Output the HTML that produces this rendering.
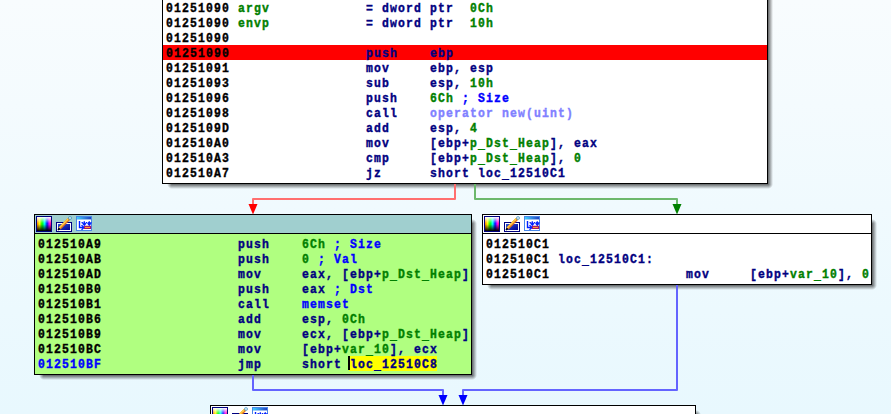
<!DOCTYPE html><html><head><meta charset="utf-8"><style>
html,body{margin:0;padding:0;}
body{width:891px;height:414px;overflow:hidden;position:relative;background:linear-gradient(to bottom,#f8fcfe 0%,#e8f8fe 100%);}
.t{position:absolute;left:0;top:0;font:bold 13.333px "Liberation Mono",monospace;letter-spacing:1.335px;transform:scaleX(0.857);transform-origin:0 0;-webkit-text-stroke:0.4px currentColor;line-height:15px;white-space:pre;color:#000;}
.t i.u{font-style:normal;position:relative;top:1px}
.n{color:#000080}.g{color:#008000}.b{color:#0000ff}.p{color:#8080ff}.k{color:#000}
svg{position:absolute;left:0;top:0;overflow:visible}
</style></head><body>
<svg width="0" height="0" style="position:absolute">
<defs>
<linearGradient id="rb" x1="0" y1="0" x2="1" y2="0">
<stop offset="0" stop-color="#ff7a00"/><stop offset="0.18" stop-color="#f8ff00"/><stop offset="0.36" stop-color="#00ff00"/>
<stop offset="0.55" stop-color="#00ffff"/><stop offset="0.72" stop-color="#0010ff"/><stop offset="0.88" stop-color="#ff00ff"/><stop offset="1" stop-color="#ff2080"/>
</linearGradient>
<linearGradient id="wb" x1="0" y1="0" x2="0" y2="1">
<stop offset="0" stop-color="#fff" stop-opacity="1"/><stop offset="0.45" stop-color="#fff" stop-opacity="0"/>
<stop offset="0.5" stop-color="#000" stop-opacity="0"/><stop offset="1" stop-color="#000" stop-opacity="1"/>
</linearGradient>
<linearGradient id="bf" x1="0" y1="0" x2="1" y2="1">
<stop offset="0" stop-color="#3050d8"/><stop offset="1" stop-color="#000090"/>
</linearGradient>
<linearGradient id="tb" x1="0" y1="0" x2="1" y2="0">
<stop offset="0" stop-color="#40d0ff"/><stop offset="1" stop-color="#2040c0"/>
</linearGradient>
<symbol id="i1" viewBox="0 0 16 16">
<rect x="0.5" y="0.5" width="15" height="15" fill="#000080"/>
<rect x="1" y="1" width="14" height="14" fill="url(#rb)"/>
<rect x="1" y="1" width="14" height="14" fill="url(#wb)"/>
<rect x="0.5" y="0.5" width="15" height="15" fill="none" stroke="#000080" stroke-width="1"/>
</symbol>
<symbol id="i2" viewBox="0 0 16 16">
<rect x="0" y="6" width="16" height="10" fill="#000080"/>
<rect x="1" y="7" width="14" height="8" fill="#fff"/>
<rect x="2" y="8" width="12" height="6" fill="url(#bf)"/>
<path d="M3.6 12.4 L13 3" stroke="#e87818" stroke-width="2.8"/>
<path d="M3 12 L12.4 2.6" stroke="#ffc828" stroke-width="1.4"/>
<path d="M4 11.5 L12 3.5" stroke="#fff" stroke-width="0.7" stroke-dasharray="0.8 1"/>
<path d="M2 14 L3.6 12.4" stroke="#000" stroke-width="1.6"/>
<circle cx="14" cy="2" r="1.8" fill="#3890c0"/>
<circle cx="14" cy="2" r="0.9" fill="#f0f8ff"/>
</symbol>
<symbol id="i3" viewBox="0 0 16 16">
<rect x="0" y="0" width="16" height="15" fill="#4a88e8"/>
<rect x="1" y="1" width="14" height="2.5" fill="url(#tb)"/>
<rect x="1" y="3.5" width="14" height="10.5" fill="#fff"/>
<path d="M3.5 5 V11.5 H7.5" stroke="#0020ff" stroke-width="1.4" fill="none"/>
<path d="M5.5 9.3 L8 11.5 L5.5 13.7" stroke="#0020ff" stroke-width="1.4" fill="none"/>
<path d="M5.5 6.6 H15.5" stroke="#0020ff" stroke-width="1.4" stroke-dasharray="1.4 0.8"/>
<path d="M8.3 5.2 V8.8 M6.6 7.2 L8.3 9.2 L10 7.2 M13.3 5.2 V8.8 M11.6 7.2 L13.3 9.2 L15 7.2" stroke="#0020ff" stroke-width="1.3" fill="none"/>
<rect x="8" y="9.8" width="7.2" height="3.2" rx="0.6" fill="#a01470"/>
<rect x="9" y="10.9" width="5" height="1.1" fill="#ffa030"/>
</symbol>
</defs></svg>
<div style="position:absolute;left:768px;top:-30px;width:5px;height:214px;background:linear-gradient(to right,rgba(0,0,0,0.60),rgba(0,0,0,0))"></div>
<div style="position:absolute;left:172px;top:184px;width:596px;height:5px;background:linear-gradient(to bottom,rgba(0,0,0,0.60),rgba(0,0,0,0))"></div>
<div style="position:absolute;left:768px;top:-35px;width:5px;height:5px;background:radial-gradient(circle 5px at 0 100%,rgba(0,0,0,0.60),rgba(0,0,0,0))"></div>
<div style="position:absolute;left:167px;top:184px;width:5px;height:5px;background:radial-gradient(circle 5px at 100% 0,rgba(0,0,0,0.60),rgba(0,0,0,0))"></div>
<div style="position:absolute;left:768px;top:184px;width:5px;height:5px;background:radial-gradient(circle 5px at 0 0,rgba(0,0,0,0.60),rgba(0,0,0,0))"></div>
<div style="position:absolute;left:162px;top:-40px;width:606px;height:224px;background:#000"></div>
<div style="position:absolute;left:163px;top:-39px;width:604px;height:222px;background:#fff;"></div>
<div style="position:absolute;left:163px;top:45px;width:604px;height:15px;background:#f00;"></div>
<div class="t" style="left:166px;top:1px"><span class="k">01251090</span> <span class="g">argv</span>            <span class="n">= dword ptr</span>  <span class="g">0Ch</span>
<span class="k">01251090</span> <span class="g">envp</span>            <span class="n">= dword ptr</span>  <span class="g">10h</span>
<span class="k">01251090</span>
<span class="k">01251090</span>                 <span class="n">push</span>    <span class="n">ebp</span>
<span class="k">01251091</span>                 <span class="n">mov</span>     <span class="n">ebp, esp</span>
<span class="k">01251093</span>                 <span class="n">sub</span>     <span class="n">esp, </span><span class="g">10h</span>
<span class="k">01251096</span>                 <span class="n">push</span>    <span class="g">6Ch</span><span class="n"> </span><span class="b">; Size</span>
<span class="k">01251098</span>                 <span class="n">call</span>    <span class="p">operator new(uint)</span>
<span class="k">0125109D</span>                 <span class="n">add</span>     <span class="n">esp, </span><span class="g">4</span>
<span class="k">012510A0</span>                 <span class="n">mov</span>     <span class="n">[ebp+</span><span class="g">p<i class="u">_</i>Dst<i class="u">_</i>Heap</span><span class="n">], eax</span>
<span class="k">012510A3</span>                 <span class="n">cmp</span>     <span class="n">[ebp+</span><span class="g">p<i class="u">_</i>Dst<i class="u">_</i>Heap</span><span class="n">], </span><span class="g">0</span>
<span class="k">012510A7</span>                 <span class="n">jz</span>      <span class="n">short loc<i class="u">_</i>12510C1</span></div>
<div style="position:absolute;left:472px;top:224px;width:5px;height:151px;background:linear-gradient(to right,rgba(0,0,0,0.60),rgba(0,0,0,0))"></div>
<div style="position:absolute;left:44px;top:375px;width:428px;height:5px;background:linear-gradient(to bottom,rgba(0,0,0,0.60),rgba(0,0,0,0))"></div>
<div style="position:absolute;left:472px;top:219px;width:5px;height:5px;background:radial-gradient(circle 5px at 0 100%,rgba(0,0,0,0.60),rgba(0,0,0,0))"></div>
<div style="position:absolute;left:39px;top:375px;width:5px;height:5px;background:radial-gradient(circle 5px at 100% 0,rgba(0,0,0,0.60),rgba(0,0,0,0))"></div>
<div style="position:absolute;left:472px;top:375px;width:5px;height:5px;background:radial-gradient(circle 5px at 0 0,rgba(0,0,0,0.60),rgba(0,0,0,0))"></div>
<div style="position:absolute;left:34px;top:214px;width:438px;height:161px;background:#000"></div>
<div style="position:absolute;left:35px;top:215px;width:436px;height:18px;background:#a0cfcf;"></div>
<div style="position:absolute;left:35px;top:234px;width:436px;height:140px;background:#b0ff80;"></div>
<svg style="position:absolute;left:36px;top:216px" width="16" height="16"><use href="#i1"/></svg><svg style="position:absolute;left:56px;top:216px" width="16" height="16"><use href="#i2"/></svg><svg style="position:absolute;left:76px;top:216px" width="16" height="16"><use href="#i3"/></svg>
<div style="position:absolute;left:349px;top:356px;width:88px;height:15px;background:#ffff00;"></div>
<div class="t" style="left:38px;top:237px"><span class="k">012510A9</span>                 <span class="n">push</span>    <span class="g">6Ch</span><span class="n"> </span><span class="b">; Size</span>
<span class="k">012510AB</span>                 <span class="n">push</span>    <span class="g">0</span><span class="n"> </span><span class="b">; Val</span>
<span class="k">012510AD</span>                 <span class="n">mov</span>     <span class="n">eax, [ebp+</span><span class="g">p<i class="u">_</i>Dst<i class="u">_</i>Heap</span><span class="n">]</span>
<span class="k">012510B0</span>                 <span class="n">push</span>    <span class="n">eax </span><span class="b">; Dst</span>
<span class="k">012510B1</span>                 <span class="n">call</span>    <span class="b">memset</span>
<span class="k">012510B6</span>                 <span class="n">add</span>     <span class="n">esp, </span><span class="g">0Ch</span>
<span class="k">012510B9</span>                 <span class="n">mov</span>     <span class="n">ecx, [ebp+</span><span class="g">p<i class="u">_</i>Dst<i class="u">_</i>Heap</span><span class="n">]</span>
<span class="k">012510BC</span>                 <span class="n">mov</span>     <span class="n">[ebp+</span><span class="g">var<i class="u">_</i>10</span><span class="n">], ecx</span>
<span class="b">012510BF</span>                 <span class="n">jmp</span>     <span class="n">short </span><span class="n">loc<i class="u">_</i>12510C8</span></div>
<div style="position:absolute;left:348px;top:356px;width:2px;height:14px;background:#000;"></div>
<div style="position:absolute;left:872px;top:224px;width:5px;height:61px;background:linear-gradient(to right,rgba(0,0,0,0.60),rgba(0,0,0,0))"></div>
<div style="position:absolute;left:492px;top:285px;width:380px;height:5px;background:linear-gradient(to bottom,rgba(0,0,0,0.60),rgba(0,0,0,0))"></div>
<div style="position:absolute;left:872px;top:219px;width:5px;height:5px;background:radial-gradient(circle 5px at 0 100%,rgba(0,0,0,0.60),rgba(0,0,0,0))"></div>
<div style="position:absolute;left:487px;top:285px;width:5px;height:5px;background:radial-gradient(circle 5px at 100% 0,rgba(0,0,0,0.60),rgba(0,0,0,0))"></div>
<div style="position:absolute;left:872px;top:285px;width:5px;height:5px;background:radial-gradient(circle 5px at 0 0,rgba(0,0,0,0.60),rgba(0,0,0,0))"></div>
<div style="position:absolute;left:482px;top:214px;width:390px;height:71px;background:#000"></div>
<div style="position:absolute;left:483px;top:215px;width:388px;height:18px;background:#fff;"></div>
<div style="position:absolute;left:483px;top:234px;width:388px;height:50px;background:#fff;"></div>
<svg style="position:absolute;left:484px;top:216px" width="16" height="16"><use href="#i1"/></svg><svg style="position:absolute;left:504px;top:216px" width="16" height="16"><use href="#i2"/></svg><svg style="position:absolute;left:524px;top:216px" width="16" height="16"><use href="#i3"/></svg>
<div class="t" style="left:486px;top:237px"><span class="k">012510C1</span>
<span class="k">012510C1</span> <span class="n">loc<i class="u">_</i>12510C1:</span>
<span class="k">012510C1</span>                 <span class="n">mov</span>     <span class="n">[ebp+</span><span class="g">var<i class="u">_</i>10</span><span class="n">], </span><span class="g">0</span></div>
<div style="position:absolute;left:696px;top:415px;width:5px;height:106px;background:linear-gradient(to right,rgba(0,0,0,0.60),rgba(0,0,0,0))"></div>
<div style="position:absolute;left:220px;top:521px;width:476px;height:5px;background:linear-gradient(to bottom,rgba(0,0,0,0.60),rgba(0,0,0,0))"></div>
<div style="position:absolute;left:696px;top:410px;width:5px;height:5px;background:radial-gradient(circle 5px at 0 100%,rgba(0,0,0,0.60),rgba(0,0,0,0))"></div>
<div style="position:absolute;left:215px;top:521px;width:5px;height:5px;background:radial-gradient(circle 5px at 100% 0,rgba(0,0,0,0.60),rgba(0,0,0,0))"></div>
<div style="position:absolute;left:696px;top:521px;width:5px;height:5px;background:radial-gradient(circle 5px at 0 0,rgba(0,0,0,0.60),rgba(0,0,0,0))"></div>
<div style="position:absolute;left:210px;top:405px;width:486px;height:116px;background:#000"></div>
<div style="position:absolute;left:211px;top:406px;width:484px;height:18px;background:#fff;"></div>
<div style="position:absolute;left:211px;top:425px;width:484px;height:95px;background:#fff;"></div>
<svg style="position:absolute;left:212px;top:407px" width="16" height="16"><use href="#i1"/></svg><svg style="position:absolute;left:232px;top:407px" width="16" height="16"><use href="#i2"/></svg><svg style="position:absolute;left:252px;top:407px" width="16" height="16"><use href="#i3"/></svg>
<svg width="891" height="414" style="position:absolute;left:0;top:0">
<path d="M455 184 V199 H253 V206" fill="none" stroke="#ff6f6f" stroke-width="2" stroke-linejoin="round"/>
<path d="M475 184 V199 H677 V206" fill="none" stroke="#6cb86c" stroke-width="2" stroke-linejoin="round"/>
<path d="M253 375 V390 H443 V397" fill="none" stroke="#6464ff" stroke-width="2" stroke-linejoin="round"/>
<path d="M677 285 V390 H463 V397" fill="none" stroke="#6464ff" stroke-width="2" stroke-linejoin="round"/>
<polygon points="248.5,204 257.5,204 253,214.5" fill="#f00"/>
<polygon points="672.5,204 681.5,204 677,214.5" fill="#008000"/>
<polygon points="438.5,395 447.5,395 443,405.5" fill="#00f"/>
<polygon points="458.5,395 467.5,395 463,405.5" fill="#00f"/>
</svg>
</body></html>
